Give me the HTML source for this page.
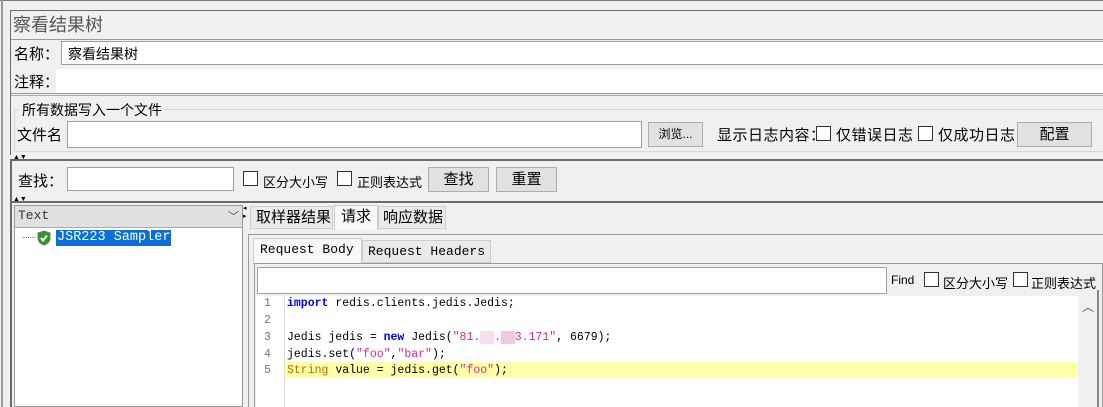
<!DOCTYPE html>
<html><head><meta charset="utf-8"><style>
*{box-sizing:border-box;margin:0;padding:0}
body{width:1103px;height:407px;background:#f0f0f0;position:relative;overflow:hidden;font-family:"Liberation Sans","Noto Sans CJK SC",sans-serif;font-size:14px;color:#000}
.a{position:absolute;white-space:nowrap}
.in{position:absolute;background:#fff;border:1px solid #a0a0a0}
.btn{position:absolute;background:#e1e1e1;border:1px solid #adadad;text-align:center;font-size:14px}
.cb{position:absolute;width:15px;height:15px;background:#fff;border:1px solid #333}
.mono{font-family:"Liberation Mono","Noto Sans CJK SC",monospace}
.ln{position:absolute;left:264px;font-family:"Liberation Mono",monospace;font-size:11.5px;color:#777}
.cd{position:absolute;left:287px;font-family:"Liberation Mono",monospace;font-size:11.5px;white-space:pre}
.kw{color:#0000ff;font-weight:bold}.st{color:#d02c8c}.ty{color:#b07000}
</style></head><body>
<div class="a" style="left:0;top:0;width:1103px;height:1px;background:#7a7a7a"></div>
<div class="a" style="left:1px;top:0;width:2px;height:407px;background:#9a9a9a"></div>
<div class="a" style="left:10px;top:10px;width:1093px;height:1px;background:#6a6a6a"></div>
<div class="a" style="left:10px;top:10px;width:1px;height:145px;background:#6a6a6a"></div>
<div class="a" style="left:13px;top:11px;font-size:18px;color:#555">察看结果树</div>
<div class="a" style="left:11px;top:39px;width:1092px;height:1px;background:#999"></div>
<div class="a" style="left:14px;top:43px;font-size:15px">名称：</div>
<div class="in" style="left:61px;top:41px;width:1050px;height:24px"></div>
<div class="a" style="left:68px;top:44px;font-size:14px">察看结果树</div>
<div class="a" style="left:56px;top:69px;width:1047px;height:25px;background:#fff"></div>
<div class="a" style="left:11px;top:93px;width:1092px;height:1px;background:#999"></div>
<div class="a" style="left:14px;top:71px;font-size:15px">注释：</div>
<div class="a" style="left:11px;top:95px;width:1092px;height:1px;background:#aaa"></div>
<div class="a" style="left:14px;top:109px;width:1095px;height:43px;border:1px solid #d6d6d6"></div>
<div class="a" style="left:19px;top:100px;padding:0 3px;background:#f0f0f0;font-size:14px">所有数据写入一个文件</div>
<div class="a" style="left:17px;top:124px;font-size:15px">文件名</div>
<div class="in" style="left:67px;top:121px;width:575px;height:27px"></div>
<div class="btn" style="left:648px;top:122px;width:55px;height:25px;font-size:12px;line-height:23px">浏览...</div>
<div class="a" style="left:717px;top:124px;font-size:15px;letter-spacing:0.5px">显示日志内容：</div>
<div class="cb" style="left:816px;top:126px"></div>
<div class="a" style="left:836px;top:124px;font-size:15px;letter-spacing:0.5px">仅错误日志</div>
<div class="cb" style="left:918px;top:126px"></div>
<div class="a" style="left:938px;top:124px;font-size:15px;letter-spacing:0.5px">仅成功日志</div>
<div class="btn" style="left:1017px;top:122px;width:75px;height:25px;line-height:23px;font-size:15px">配置</div>
<div class="a" style="left:13px;top:154px;font-size:7px;line-height:7px">▲▼</div>
<div class="a" style="left:10px;top:159px;width:1093px;height:2px;background:#6a6a6a"></div>
<div class="a" style="left:10px;top:159px;width:2px;height:42px;background:#6a6a6a"></div>
<div class="a" style="left:18px;top:170px;font-size:15px">查找：</div>
<div class="in" style="left:67px;top:167px;width:167px;height:24px"></div>
<div class="cb" style="left:243px;top:171px"></div>
<div class="a" style="left:263px;top:172px;font-size:13px">区分大小写</div>
<div class="cb" style="left:337px;top:171px"></div>
<div class="a" style="left:357px;top:172px;font-size:13px">正则表达式</div>
<div class="btn" style="left:428px;top:167px;width:61px;height:25px;line-height:23px;font-size:15px">查找</div>
<div class="btn" style="left:496px;top:167px;width:61px;height:25px;line-height:23px;font-size:15px">重置</div>
<div class="a" style="left:13px;top:196px;font-size:7px;line-height:7px">▲▼</div>
<div class="a" style="left:10px;top:201px;width:1093px;height:2px;background:#6a6a6a"></div>
<div class="a" style="left:10px;top:201px;width:2px;height:206px;background:#6a6a6a"></div>
<!-- left tree -->
<div class="a" style="left:14px;top:205px;width:229px;height:202px;background:#fff;border:1px solid #999"></div>
<div class="a" style="left:15px;top:206px;width:227px;height:22px;background:#e0e0e0;border-bottom:1px solid #aaa"></div>
<div class="a mono" style="left:18px;top:208px;font-size:13px;color:#333">Text</div>
<div class="a" style="left:228px;top:208px;font-size:11px;color:#555">﹀</div>
<div class="a" style="left:23px;top:237px;width:12px;border-top:1px dotted #888"></div>
<svg class="a" style="left:36px;top:230px" width="16" height="16" viewBox="0 0 16 16"><path d="M8 1 L14 3 V8 C14 12 11 14 8 15 C5 14 2 12 2 8 V3 Z" fill="#2a9a2a" stroke="#777"/><path d="M5 8 L7 10.5 L11 5.5" fill="none" stroke="#fff" stroke-width="2"/></svg>
<div class="a mono" style="left:56px;top:230px;height:16px;padding:0 1px;background:#0b6fd6;color:#fff;font-size:13.5px;line-height:16px">JSR223 Sampler</div>
<div class="a" style="left:243px;top:205px;font-size:7px;line-height:8px">◂<br>▸</div>
<!-- right tabs -->
<div class="a" style="left:250px;top:206px;width:83px;height:23px;border:1px solid #ccc;background:#eaeaea;font-size:15px;padding-left:5px;line-height:22px">取样器结果</div>
<div class="a" style="left:334px;top:205px;width:44px;height:25px;border:1px solid #ccc;border-bottom:none;background:#f8f8f8;font-size:15px;padding-left:6px;line-height:22px">请求</div>
<div class="a" style="left:378px;top:206px;width:68px;height:23px;border:1px solid #ccc;background:#eaeaea;font-size:15px;padding-left:4px;line-height:22px">响应数据</div>
<div class="a" style="left:248px;top:234px;width:855px;height:173px;border:1px solid #999;border-right:none;border-bottom:none;background:#f0f0f0"></div>
<div class="a mono" style="left:253px;top:238px;width:109px;height:26px;border:1px solid #ccc;border-bottom:none;background:#f8f8f8;font-size:13px;padding-left:6px;line-height:22px">Request Body</div>
<div class="a mono" style="left:362px;top:240px;width:129px;height:23px;border:1px solid #ccc;background:#eaeaea;font-size:13px;padding-left:5px;line-height:22px">Request Headers</div>
<div class="a" style="left:254px;top:263px;width:849px;height:144px;border:1px solid #999;border-bottom:none"></div>
<div class="in" style="left:257px;top:267px;width:630px;height:27px"></div>
<div class="a" style="left:891px;top:273px;font-size:12px">Find</div>
<div class="cb" style="left:924px;top:272px"></div>
<div class="a" style="left:943px;top:273px;font-size:13px">区分大小写</div>
<div class="cb" style="left:1013px;top:272px"></div>
<div class="a" style="left:1031px;top:273px;font-size:13px">正则表达式</div>
<div class="a" style="left:256px;top:296px;width:840px;height:111px;background:#fff"></div>
<div class="a" style="left:284px;top:296px;width:1px;height:111px;background:#ddd"></div>
<div class="a" style="left:1078px;top:296px;width:19px;height:111px;background:#f0f0f0"></div>
<div class="a" style="left:1082px;top:298px;font-size:12px;color:#555">︿</div>
<div class="a" style="left:1097px;top:290px;width:2px;height:117px;background:#888"></div>
<div class="a" style="left:285px;top:362px;width:792px;height:16px;background:#ffffaa"></div>
<div class="ln" style="top:297px">1</div><div class="ln" style="top:314px">2</div><div class="ln" style="top:331px">3</div><div class="ln" style="top:348px">4</div><div class="ln" style="top:364px">5</div>
<div class="cd" style="top:297px"><span class="kw">import</span> redis.clients.jedis.Jedis;</div>
<div class="cd" style="top:331px">Jedis jedis = <span class="kw">new</span> Jedis(<span class="st">"81.<span style="background:#f6e0f0;color:transparent">xx</span>.<span style="background:#f0c8e4;color:#f0c8e4">xx</span>3.171"</span>, 6679);</div>
<div class="cd" style="top:348px">jedis.set(<span class="st">"foo"</span>,<span class="st">"bar"</span>);</div>
<div class="cd" style="top:364px"><span class="ty">String</span> value = jedis.get(<span class="st">"foo"</span>);</div>
</body></html>
